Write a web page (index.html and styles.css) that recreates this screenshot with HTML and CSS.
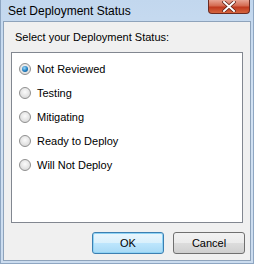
FILE: index.html
```html
<!DOCTYPE html>
<html lang="en">
<head>
    <meta charset="UTF-8">
    <title>Set Deployment Status</title>
    <link rel="stylesheet" href="styles.css">
</head>
<body>

    <div class="window">
        <div class="titlebar">
            <span class="title">Set Deployment Status</span>
            <button class="close-btn">
                <svg width="14" height="11" viewBox="0 0 14 11">
                    <path d="M2 1 L12 10 M12 1 L2 10" stroke="#5a1d12" stroke-width="3.4" stroke-linecap="square"/>
                    <path d="M2 1 L12 10 M12 1 L2 10" stroke="#ffffff" stroke-width="2" stroke-linecap="square"/>
                </svg>
            </button>
        </div>

        <div class="client">
            <p class="prompt">Select your Deployment Status:</p>

            <div class="listbox">
                <label class="option"><span class="radio checked"></span>Not Reviewed</label>
                <label class="option"><span class="radio"></span>Testing</label>
                <label class="option"><span class="radio"></span>Mitigating</label>
                <label class="option"><span class="radio"></span>Ready to Deploy</label>
                <label class="option"><span class="radio"></span>Will Not Deploy</label>
            </div>

            <div class="buttons">
                <button class="btn default-btn">OK</button>
                <button class="btn">Cancel</button>
            </div>
        </div>
    </div>

</body>
</html>
```

FILE: styles.css
```css
body {
    margin: 0;
    font-family: "Liberation Sans", Arial, sans-serif;
    font-size: 11px;
    color: #000;
}
.window {
    width: 254px;
    height: 264px;
    box-sizing: border-box;
    display: flex;
    flex-direction: column;
    background: linear-gradient(180deg, #c2d7ee, #d3e3f4 40%, #cbdcef);
    border: 1px solid #8ea6c2;
    border-top: none;
    padding: 0 2px 2px 2px;
}
.titlebar {
    height: 21px;
    display: flex;
    justify-content: space-between;
    align-items: flex-start;
}
.title {
    font-size: 12px;
    padding: 4px 0 0 5px;
}
.close-btn {
    width: 42px;
    height: 14px;
    margin-right: 1px;
    padding: 0;
    border: 1px solid #6b2b22;
    border-top: none;
    border-radius: 0 0 4px 4px;
    background: linear-gradient(180deg, #e8a493, #d46a50 45%, #c0391e 55%, #d5653f);
    display: flex;
    align-items: center;
    justify-content: center;
}
.client {
    flex: 1;
    background: #f0f0f0;
    border: 1px solid #8ea3bb;
    display: flex;
    flex-direction: column;
}
.prompt {
    margin: 9px 0 0 11px;
    height: 21px;
}
.listbox {
    margin: 0 7px 0 7px;
    height: 159px;
    background: #fff;
    border: 1px solid #828790;
    padding-top: 10px;
    display: flex;
    flex-direction: column;
    gap: 12px;
}
.option {
    display: flex;
    align-items: center;
    height: 12px;
    padding-left: 7px;
    gap: 6px;
}
.radio {
    width: 10px;
    height: 10px;
    border-radius: 50%;
    border: 1px solid #8f8f8f;
    background: radial-gradient(circle at 50% 40%, #fbfbfb, #e2e2e2 60%, #cfcfcf);
    display: flex;
    align-items: center;
    justify-content: center;
}
.radio.checked::after {
    content: "";
    width: 6px;
    height: 6px;
    border-radius: 50%;
    background: radial-gradient(circle at 40% 35%, #9ed9f8, #1d7cc0 55%, #0c4a7c);
}
.buttons {
    display: flex;
    justify-content: flex-end;
    gap: 9px;
    margin: 9px 5px 0 0;
}
.btn {
    width: 72px;
    height: 22px;
    font-family: "Liberation Sans", Arial, sans-serif;
    font-size: 11px;
    border: 1px solid #707070;
    border-radius: 3px;
    background: linear-gradient(180deg, #f2f2f2, #ebebeb 50%, #dddddd 50%, #cfcfcf);
    padding: 0;
}
.default-btn {
    border-color: #3c7fb1;
    background: linear-gradient(180deg, #eaf6fd, #d9f0fc 50%, #bee6fd 50%, #a7d9f5);
    box-shadow: inset 0 0 0 1px #8fd3f5;
}
```
